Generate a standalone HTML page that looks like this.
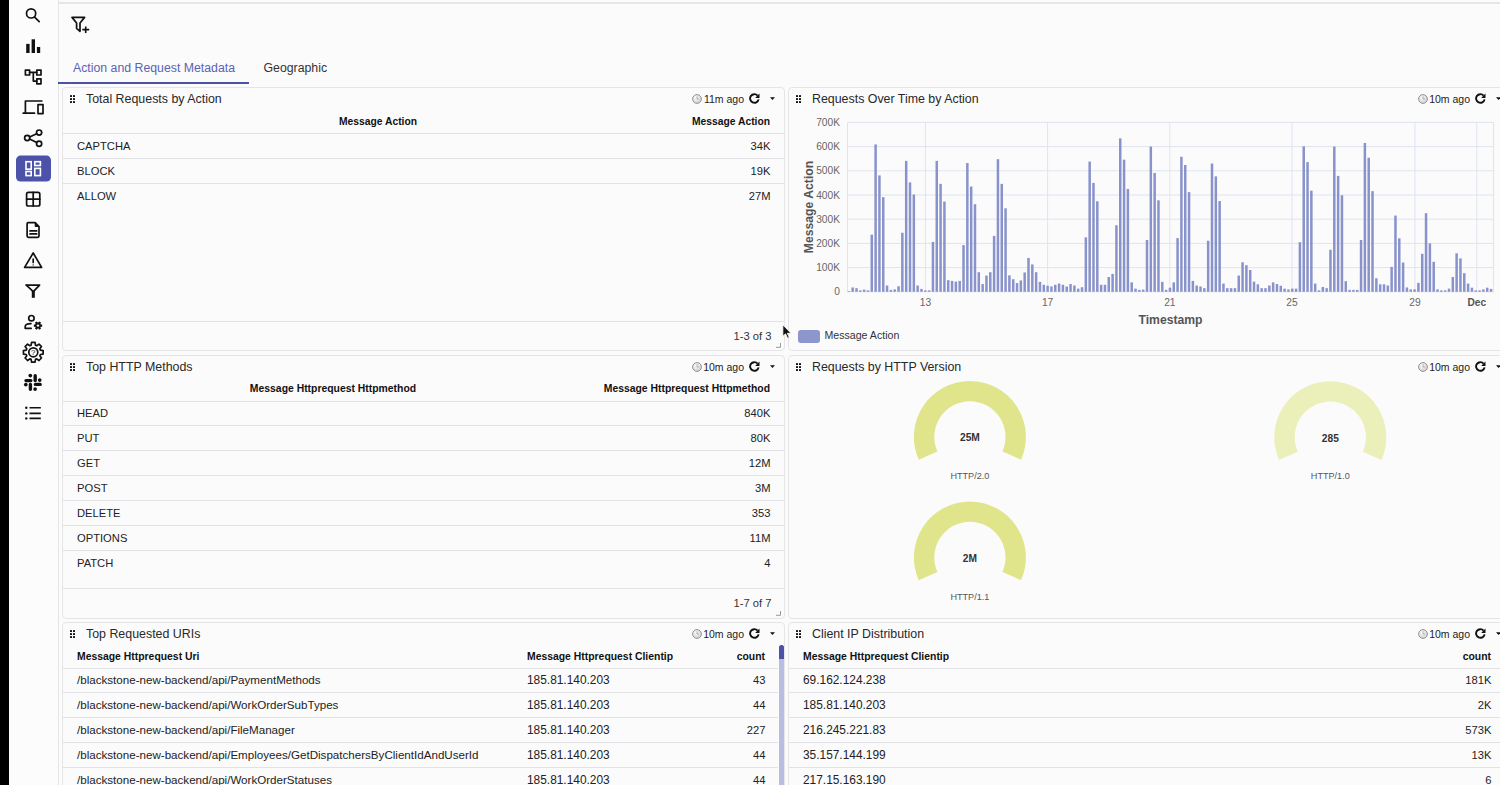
<!DOCTYPE html>
<html><head><meta charset="utf-8"><style>
html,body{margin:0;padding:0;}
body{width:1500px;height:785px;overflow:hidden;position:relative;background:#fcfbfc;font-family:"Liberation Sans", sans-serif;}
.t{position:absolute;white-space:nowrap;}
.r{position:absolute;}
.p{position:absolute;box-sizing:border-box;border:1.3px solid #e5e4e7;border-radius:4px;background:#fcfbfc;}
</style></head><body>
<div class="r" style="left:9px;top:0px;width:48.5px;height:785px;background:#fdfcfd;"></div>
<div class="r" style="left:0px;top:0px;width:9px;height:785px;background:#000;"></div>
<div class="r" style="left:57.5px;top:0px;width:1.5px;height:785px;background:#e5e4e7;"></div>
<div class="r" style="left:59px;top:2px;width:1441px;height:2px;background:#e6e5e8;"></div>
<svg class="r" style="left:0;top:0" width="57" height="440" viewBox="0 0 57 440">
<circle cx="31.1" cy="13.4" r="4.6" stroke="#111" fill="none" stroke-width="1.7" stroke-linecap="round" stroke-linejoin="round"/><path d="M34.6 17.2L39.2 21.6" stroke="#111" fill="none" stroke-width="1.7" stroke-linecap="round" stroke-linejoin="round" stroke-width="1.9"/>
<rect x="26.2" y="43.9" width="3.4" height="9.1" fill="#111"/><rect x="31.6" y="39.3" width="3.4" height="13.7" fill="#111"/><rect x="36.9" y="47" width="3.3" height="6" fill="#111"/>
<rect x="25.4" y="70.1" width="4.2" height="4.9" stroke="#111" fill="none" stroke-width="1.7" stroke-linecap="round" stroke-linejoin="round" stroke-width="1.5" stroke-linecap="butt" stroke-linejoin="miter"/>
<rect x="36.8" y="70.1" width="4.2" height="4.9" stroke="#111" fill="none" stroke-width="1.7" stroke-linecap="round" stroke-linejoin="round" stroke-width="1.5" stroke-linecap="butt" stroke-linejoin="miter"/>
<rect x="36.8" y="78.8" width="4.2" height="5" stroke="#111" fill="none" stroke-width="1.7" stroke-linecap="round" stroke-linejoin="round" stroke-width="1.5" stroke-linecap="butt" stroke-linejoin="miter"/>
<path d="M29.6 72.3H36.8M33.3 72.3V81.1H36.8" stroke="#111" fill="none" stroke-width="1.7" stroke-linecap="round" stroke-linejoin="round" stroke-width="1.4" stroke-linecap="butt"/>
<path d="M41.8 101H25.4V113.2M23.2 113.2H34.5" stroke="#111" fill="none" stroke-width="1.7" stroke-linecap="round" stroke-linejoin="round" stroke-width="2" stroke-linecap="butt"/>
<rect x="38" y="104.6" width="5" height="9" stroke="#111" fill="none" stroke-width="1.7" stroke-linecap="round" stroke-linejoin="round" stroke-width="1.8" stroke-linecap="butt"/>
<circle cx="27.2" cy="138" r="2.6" stroke="#111" fill="none" stroke-width="1.7" stroke-linecap="round" stroke-linejoin="round" stroke-width="1.6"/><circle cx="39.1" cy="132.6" r="2.6" stroke="#111" fill="none" stroke-width="1.7" stroke-linecap="round" stroke-linejoin="round" stroke-width="1.6"/><circle cx="39.1" cy="143.7" r="2.6" stroke="#111" fill="none" stroke-width="1.7" stroke-linecap="round" stroke-linejoin="round" stroke-width="1.6"/>
<path d="M29.6 136.9L36.7 133.7M29.6 139.1L36.7 142.6" stroke="#111" fill="none" stroke-width="1.7" stroke-linecap="round" stroke-linejoin="round" stroke-width="1.5"/>
<rect x="16" y="155.6" width="35" height="26" rx="4.5" fill="#4b52a7"/>
<rect x="26" y="161.7" width="5.2" height="7.5" stroke="#fff" stroke-width="1.6" fill="none"/>
<rect x="34.8" y="161.7" width="5.6" height="3.8" stroke="#fff" stroke-width="1.6" fill="none"/>
<rect x="26" y="171.5" width="5.2" height="4.1" stroke="#fff" stroke-width="1.6" fill="none"/>
<rect x="34.8" y="168.4" width="5.6" height="7.2" stroke="#fff" stroke-width="1.6" fill="none"/>
<rect x="26.6" y="192.4" width="13.2" height="13.6" rx="1.8" stroke="#111" fill="none" stroke-width="1.7" stroke-linecap="round" stroke-linejoin="round" stroke-width="1.9"/><path d="M33.2 192.4V206M26.6 199.2H39.8" stroke="#111" fill="none" stroke-width="1.7" stroke-linecap="round" stroke-linejoin="round" stroke-width="1.7"/>
<path d="M28.3 222.6H35.2L39 226.5V236.1A1.2 1.2 0 0 1 37.8 237.3H28.3A1.2 1.2 0 0 1 27.1 236.1V223.8A1.2 1.2 0 0 1 28.3 222.6Z" stroke="#111" fill="none" stroke-width="1.7" stroke-linecap="round" stroke-linejoin="round" stroke-width="1.6"/>
<path d="M35.2 222.6V226.5H39" fill="#111" stroke="#111" stroke-width="1"/>
<path d="M30 230.9H36.7M30 233.9H36.7" stroke="#111" fill="none" stroke-width="1.7" stroke-linecap="round" stroke-linejoin="round" stroke-width="1.2"/>
<path d="M33.2 253L24.6 267.4H41.6Z" stroke="#111" fill="none" stroke-width="1.7" stroke-linecap="round" stroke-linejoin="round" stroke-width="1.6"/><path d="M33.2 259V262.4" stroke="#111" fill="none" stroke-width="1.7" stroke-linecap="round" stroke-linejoin="round" stroke-width="1.3"/><circle cx="33.2" cy="264.9" r="0.7" fill="#111"/>
<path d="M26.3 285.1H39.6L33.3 291.6" stroke="#111" fill="none" stroke-width="1.7" stroke-linecap="round" stroke-linejoin="round" stroke-width="1.7"/><path d="M26.3 285.1L33.3 291.6" stroke="#111" fill="none" stroke-width="1.7" stroke-linecap="round" stroke-linejoin="round" stroke-width="1.7"/><rect x="31.8" y="291" width="3" height="6.8" fill="#111"/>
<circle cx="31.4" cy="318.2" r="2.7" stroke="#111" fill="none" stroke-width="1.7" stroke-linecap="round" stroke-linejoin="round" stroke-width="1.5"/><path d="M31.2 328.3H25.2V326.6C25.2 324.6 28 323.6 31 323.6" stroke="#111" fill="none" stroke-width="1.7" stroke-linecap="round" stroke-linejoin="round" stroke-width="1.6"/>
<path d="M40.77 324.44L42.15 324.49L42.15 326.71L40.77 326.76L40.39 327.41L41.04 328.64L39.11 329.75L38.38 328.58L37.62 328.58L36.89 329.75L34.96 328.64L35.61 327.41L35.23 326.76L33.85 326.71L33.85 324.49L35.23 324.44L35.61 323.79L34.96 322.56L36.89 321.45L37.62 322.62L38.38 322.62L39.11 321.45L41.04 322.56L40.39 323.79Z" fill="#111"/><circle cx="38" cy="325.6" r="1.2" fill="#fcfbfc"/>
<path d="M40.37 350.12L43.14 350.54L43.14 354.06L40.37 354.48L39.84 355.76L41.50 358.02L39.02 360.50L36.76 358.84L35.48 359.37L35.06 362.14L31.54 362.14L31.12 359.37L29.84 358.84L27.58 360.50L25.10 358.02L26.76 355.76L26.23 354.48L23.46 354.06L23.46 350.54L26.23 350.12L26.76 348.84L25.10 346.58L27.58 344.10L29.84 345.76L31.12 345.23L31.54 342.46L35.06 342.46L35.48 345.23L36.76 345.76L39.02 344.10L41.50 346.58L39.84 348.84Z" stroke="#111" fill="none" stroke-width="1.7" stroke-linecap="round" stroke-linejoin="round" stroke-width="1.5"/>
<circle cx="33.3" cy="352.3" r="4.5" stroke="#111" fill="none" stroke-width="1.7" stroke-linecap="round" stroke-linejoin="round" stroke-width="1.2"/>
<text x="33.3" y="355.2" font-size="8" font-family="Liberation Sans" text-anchor="middle" fill="#111">?</text>
<g stroke="#111" stroke-width="3.4" stroke-linecap="round" fill="none">
<path d="M26 380.6H30.8M35.2 375.8V380.6M35.4 384.4H40.2M30.4 384.4V389.2"/></g>
<g fill="#111"><circle cx="30.3" cy="375.6" r="1.85"/><circle cx="39.7" cy="380.1" r="1.85"/><circle cx="35.1" cy="389.1" r="1.85"/><circle cx="25.8" cy="384.6" r="1.85"/></g>
<circle cx="26.3" cy="407.8" r="1.2" fill="#111"/><circle cx="26.3" cy="413.4" r="1.2" fill="#111"/><circle cx="26.3" cy="418.4" r="1.2" fill="#111"/>
<path d="M29.5 407.8H40.8M29.5 413.4H40.8M29.5 418.4H40.8" stroke="#111" stroke-width="1.6"/>
</svg>
<svg class="r" style="left:0;top:0" width="100" height="40" viewBox="0 0 100 40">
<path d="M72 17.4H84.6L80 23V31.3L76.6 28.4V23Z" stroke="#111" stroke-width="1.7" fill="none" stroke-linejoin="round"/>
<path d="M82.3 29.6H89.2M85.7 26.4V33" stroke="#111" stroke-width="1.6"/>
</svg>
<div class="t" style="left:73px;top:60.40px;font-size:12.3px;line-height:16px;font-weight:normal;color:#5a64b2;">Action and Request Metadata</div>
<div class="t" style="left:263.5px;top:60.40px;font-size:12.3px;line-height:16px;font-weight:normal;color:#333;">Geographic</div>
<div class="r" style="left:58.3px;top:82px;width:191px;height:2.2px;background:#4b52a7;"></div>
<div class="p" style="left:62px;top:87px;width:723px;height:264px"></div>
<div class="r" style="left:70.0px;top:95.0px;width:2px;height:2px;background:#111;border-radius:0.6px"></div>
<div class="r" style="left:70.0px;top:98.1px;width:2px;height:2px;background:#111;border-radius:0.6px"></div>
<div class="r" style="left:70.0px;top:101.2px;width:2px;height:2px;background:#111;border-radius:0.6px"></div>
<div class="r" style="left:73.3px;top:95.0px;width:2px;height:2px;background:#111;border-radius:0.6px"></div>
<div class="r" style="left:73.3px;top:98.1px;width:2px;height:2px;background:#111;border-radius:0.6px"></div>
<div class="r" style="left:73.3px;top:101.2px;width:2px;height:2px;background:#111;border-radius:0.6px"></div>
<div class="t" style="left:86px;top:90.50px;font-size:12.4px;line-height:16px;font-weight:normal;color:#282828;">Total Requests by Action</div>
<svg class="r" style="left:770px;top:96.8px" width="5" height="3.2" viewBox="0 0 5 3.2"><path d="M0 0.2H5L2.5 3Z" fill="#111"/></svg>
<svg class="r" style="left:749.4px;top:93.2px" width="11" height="11" viewBox="0 0 11 11"><path d="M8.6 2.6A4.3 4.3 0 1 0 9.6 6.4" stroke="#111" stroke-width="1.9" fill="none"/><path d="M10.5 0.6V4.9H6.2Z" fill="#111"/></svg>
<div class="t" style="left:44px;width:700px;text-align:right;top:92.10px;font-size:10.5px;line-height:14px;font-weight:normal;color:#222;">11m ago</div>
<svg class="r" style="left:692px;top:93.5px" width="10" height="10" viewBox="0 0 10 10"><defs><radialGradient id="cg" cx="0.4" cy="0.35" r="0.7"><stop offset="0" stop-color="#fafafa"/><stop offset="1" stop-color="#cfcfcf"/></radialGradient></defs><circle cx="5" cy="5" r="4.4" fill="url(#cg)" stroke="#8a8a8a" stroke-width="0.9"/><path d="M5 2.3V5H6.9" stroke="#888" stroke-width="0.6" fill="none"/></svg>
<div class="t" style="left:28px;width:700px;text-align:center;top:114.80px;font-size:10.3px;line-height:13px;font-weight:bold;color:#111;">Message Action</div>
<div class="t" style="left:70px;width:700px;text-align:right;top:114.80px;font-size:10.3px;line-height:13px;font-weight:bold;color:#111;">Message Action</div>
<div class="r" style="left:63px;top:133px;width:721px;height:1px;background:#e2e1e5;"></div>
<div class="t" style="left:77px;top:138.80px;font-size:11.2px;line-height:15px;font-weight:normal;color:#222;">CAPTCHA</div>
<div class="t" style="left:70.5px;width:700px;text-align:right;top:138.80px;font-size:11.2px;line-height:15px;font-weight:normal;color:#222;">34K</div>
<div class="r" style="left:63px;top:158px;width:721px;height:1px;background:#e2e1e5;"></div>
<div class="t" style="left:77px;top:163.80px;font-size:11.2px;line-height:15px;font-weight:normal;color:#222;">BLOCK</div>
<div class="t" style="left:70.5px;width:700px;text-align:right;top:163.80px;font-size:11.2px;line-height:15px;font-weight:normal;color:#222;">19K</div>
<div class="r" style="left:63px;top:183px;width:721px;height:1px;background:#e2e1e5;"></div>
<div class="t" style="left:77px;top:188.80px;font-size:11.2px;line-height:15px;font-weight:normal;color:#222;">ALLOW</div>
<div class="t" style="left:70.5px;width:700px;text-align:right;top:188.80px;font-size:11.2px;line-height:15px;font-weight:normal;color:#222;">27M</div>
<div class="r" style="left:63px;top:321px;width:721px;height:1px;background:#e2e1e5;"></div>
<div class="t" style="left:71.39999999999998px;width:700px;text-align:right;top:328.60px;font-size:11.2px;line-height:15px;font-weight:normal;color:#333;">1-3 of 3</div>
<svg class="r" style="left:775px;top:342px" width="7" height="7" viewBox="0 0 7 7"><path d="M1 5.3H5.5V1" stroke="#999" stroke-width="1" fill="none"/></svg>
<div class="p" style="left:62px;top:355px;width:723px;height:263.5px"></div>
<div class="r" style="left:70.0px;top:363.0px;width:2px;height:2px;background:#111;border-radius:0.6px"></div>
<div class="r" style="left:70.0px;top:366.1px;width:2px;height:2px;background:#111;border-radius:0.6px"></div>
<div class="r" style="left:70.0px;top:369.2px;width:2px;height:2px;background:#111;border-radius:0.6px"></div>
<div class="r" style="left:73.3px;top:363.0px;width:2px;height:2px;background:#111;border-radius:0.6px"></div>
<div class="r" style="left:73.3px;top:366.1px;width:2px;height:2px;background:#111;border-radius:0.6px"></div>
<div class="r" style="left:73.3px;top:369.2px;width:2px;height:2px;background:#111;border-radius:0.6px"></div>
<div class="t" style="left:86px;top:358.50px;font-size:12.4px;line-height:16px;font-weight:normal;color:#282828;">Top HTTP Methods</div>
<svg class="r" style="left:770px;top:364.8px" width="5" height="3.2" viewBox="0 0 5 3.2"><path d="M0 0.2H5L2.5 3Z" fill="#111"/></svg>
<svg class="r" style="left:749.4px;top:361.2px" width="11" height="11" viewBox="0 0 11 11"><path d="M8.6 2.6A4.3 4.3 0 1 0 9.6 6.4" stroke="#111" stroke-width="1.9" fill="none"/><path d="M10.5 0.6V4.9H6.2Z" fill="#111"/></svg>
<div class="t" style="left:44px;width:700px;text-align:right;top:360.10px;font-size:10.5px;line-height:14px;font-weight:normal;color:#222;">10m ago</div>
<svg class="r" style="left:692px;top:361.5px" width="10" height="10" viewBox="0 0 10 10"><defs><radialGradient id="cg" cx="0.4" cy="0.35" r="0.7"><stop offset="0" stop-color="#fafafa"/><stop offset="1" stop-color="#cfcfcf"/></radialGradient></defs><circle cx="5" cy="5" r="4.4" fill="url(#cg)" stroke="#8a8a8a" stroke-width="0.9"/><path d="M5 2.3V5H6.9" stroke="#888" stroke-width="0.6" fill="none"/></svg>
<div class="t" style="left:-17px;width:700px;text-align:center;top:381.80px;font-size:10.4px;line-height:14px;font-weight:bold;color:#111;">Message Httprequest Httpmethod</div>
<div class="t" style="left:70px;width:700px;text-align:right;top:381.80px;font-size:10.4px;line-height:14px;font-weight:bold;color:#111;">Message Httprequest Httpmethod</div>
<div class="r" style="left:63px;top:401px;width:721px;height:1px;background:#e2e1e5;"></div>
<div class="t" style="left:77px;top:406.30px;font-size:11.2px;line-height:15px;font-weight:normal;color:#222;">HEAD</div>
<div class="t" style="left:70.5px;width:700px;text-align:right;top:406.30px;font-size:11.2px;line-height:15px;font-weight:normal;color:#222;">840K</div>
<div class="r" style="left:63px;top:425px;width:721px;height:1px;background:#e2e1e5;"></div>
<div class="t" style="left:77px;top:431.30px;font-size:11.2px;line-height:15px;font-weight:normal;color:#222;">PUT</div>
<div class="t" style="left:70.5px;width:700px;text-align:right;top:431.30px;font-size:11.2px;line-height:15px;font-weight:normal;color:#222;">80K</div>
<div class="r" style="left:63px;top:450px;width:721px;height:1px;background:#e2e1e5;"></div>
<div class="t" style="left:77px;top:456.30px;font-size:11.2px;line-height:15px;font-weight:normal;color:#222;">GET</div>
<div class="t" style="left:70.5px;width:700px;text-align:right;top:456.30px;font-size:11.2px;line-height:15px;font-weight:normal;color:#222;">12M</div>
<div class="r" style="left:63px;top:475px;width:721px;height:1px;background:#e2e1e5;"></div>
<div class="t" style="left:77px;top:481.30px;font-size:11.2px;line-height:15px;font-weight:normal;color:#222;">POST</div>
<div class="t" style="left:70.5px;width:700px;text-align:right;top:481.30px;font-size:11.2px;line-height:15px;font-weight:normal;color:#222;">3M</div>
<div class="r" style="left:63px;top:500px;width:721px;height:1px;background:#e2e1e5;"></div>
<div class="t" style="left:77px;top:506.30px;font-size:11.2px;line-height:15px;font-weight:normal;color:#222;">DELETE</div>
<div class="t" style="left:70.5px;width:700px;text-align:right;top:506.30px;font-size:11.2px;line-height:15px;font-weight:normal;color:#222;">353</div>
<div class="r" style="left:63px;top:525px;width:721px;height:1px;background:#e2e1e5;"></div>
<div class="t" style="left:77px;top:531.30px;font-size:11.2px;line-height:15px;font-weight:normal;color:#222;">OPTIONS</div>
<div class="t" style="left:70.5px;width:700px;text-align:right;top:531.30px;font-size:11.2px;line-height:15px;font-weight:normal;color:#222;">11M</div>
<div class="r" style="left:63px;top:550px;width:721px;height:1px;background:#e2e1e5;"></div>
<div class="t" style="left:77px;top:556.30px;font-size:11.2px;line-height:15px;font-weight:normal;color:#222;">PATCH</div>
<div class="t" style="left:70.5px;width:700px;text-align:right;top:556.30px;font-size:11.2px;line-height:15px;font-weight:normal;color:#222;">4</div>
<div class="r" style="left:63px;top:588px;width:721px;height:1px;background:#e2e1e5;"></div>
<div class="t" style="left:71.39999999999998px;width:700px;text-align:right;top:596.00px;font-size:11.2px;line-height:15px;font-weight:normal;color:#333;">1-7 of 7</div>
<svg class="r" style="left:775px;top:609.5px" width="7" height="7" viewBox="0 0 7 7"><path d="M1 5.3H5.5V1" stroke="#999" stroke-width="1" fill="none"/></svg>
<div class="p" style="left:62px;top:622px;width:723px;height:200px"></div>
<div class="r" style="left:70.0px;top:630.0px;width:2px;height:2px;background:#111;border-radius:0.6px"></div>
<div class="r" style="left:70.0px;top:633.1px;width:2px;height:2px;background:#111;border-radius:0.6px"></div>
<div class="r" style="left:70.0px;top:636.2px;width:2px;height:2px;background:#111;border-radius:0.6px"></div>
<div class="r" style="left:73.3px;top:630.0px;width:2px;height:2px;background:#111;border-radius:0.6px"></div>
<div class="r" style="left:73.3px;top:633.1px;width:2px;height:2px;background:#111;border-radius:0.6px"></div>
<div class="r" style="left:73.3px;top:636.2px;width:2px;height:2px;background:#111;border-radius:0.6px"></div>
<div class="t" style="left:86px;top:625.50px;font-size:12.4px;line-height:16px;font-weight:normal;color:#282828;">Top Requested URIs</div>
<svg class="r" style="left:770px;top:631.8px" width="5" height="3.2" viewBox="0 0 5 3.2"><path d="M0 0.2H5L2.5 3Z" fill="#111"/></svg>
<svg class="r" style="left:749.4px;top:628.2px" width="11" height="11" viewBox="0 0 11 11"><path d="M8.6 2.6A4.3 4.3 0 1 0 9.6 6.4" stroke="#111" stroke-width="1.9" fill="none"/><path d="M10.5 0.6V4.9H6.2Z" fill="#111"/></svg>
<div class="t" style="left:44px;width:700px;text-align:right;top:627.10px;font-size:10.5px;line-height:14px;font-weight:normal;color:#222;">10m ago</div>
<svg class="r" style="left:692px;top:628.5px" width="10" height="10" viewBox="0 0 10 10"><defs><radialGradient id="cg" cx="0.4" cy="0.35" r="0.7"><stop offset="0" stop-color="#fafafa"/><stop offset="1" stop-color="#cfcfcf"/></radialGradient></defs><circle cx="5" cy="5" r="4.4" fill="url(#cg)" stroke="#8a8a8a" stroke-width="0.9"/><path d="M5 2.3V5H6.9" stroke="#888" stroke-width="0.6" fill="none"/></svg>
<div class="t" style="left:77px;top:649.60px;font-size:10.4px;line-height:14px;font-weight:bold;color:#111;">Message Httprequest Uri</div>
<div class="t" style="left:527px;top:649.60px;font-size:10.4px;line-height:14px;font-weight:bold;color:#111;">Message Httprequest Clientip</div>
<div class="t" style="left:65px;width:700px;text-align:right;top:649.60px;font-size:10.4px;line-height:14px;font-weight:bold;color:#111;">count</div>
<div class="r" style="left:63px;top:668px;width:715px;height:1px;background:#e2e1e5;"></div>
<div class="t" style="left:77px;top:671.80px;font-size:11.6px;line-height:15px;font-weight:normal;color:#222;">/blackstone-new-backend/api/PaymentMethods</div>
<div class="t" style="left:527px;top:672.80px;font-size:11.9px;line-height:15px;font-weight:normal;color:#222;">185.81.140.203</div>
<div class="t" style="left:65.5px;width:700px;text-align:right;top:672.70px;font-size:11.2px;line-height:15px;font-weight:normal;color:#222;">43</div>
<div class="r" style="left:63px;top:692px;width:715px;height:1px;background:#e2e1e5;"></div>
<div class="t" style="left:77px;top:696.80px;font-size:11.6px;line-height:15px;font-weight:normal;color:#222;">/blackstone-new-backend/api/WorkOrderSubTypes</div>
<div class="t" style="left:527px;top:697.80px;font-size:11.9px;line-height:15px;font-weight:normal;color:#222;">185.81.140.203</div>
<div class="t" style="left:65.5px;width:700px;text-align:right;top:697.70px;font-size:11.2px;line-height:15px;font-weight:normal;color:#222;">44</div>
<div class="r" style="left:63px;top:717px;width:715px;height:1px;background:#e2e1e5;"></div>
<div class="t" style="left:77px;top:721.80px;font-size:11.6px;line-height:15px;font-weight:normal;color:#222;">/blackstone-new-backend/api/FileManager</div>
<div class="t" style="left:527px;top:722.80px;font-size:11.9px;line-height:15px;font-weight:normal;color:#222;">185.81.140.203</div>
<div class="t" style="left:65.5px;width:700px;text-align:right;top:722.70px;font-size:11.2px;line-height:15px;font-weight:normal;color:#222;">227</div>
<div class="r" style="left:63px;top:742px;width:715px;height:1px;background:#e2e1e5;"></div>
<div class="t" style="left:77px;top:746.80px;font-size:11.6px;line-height:15px;font-weight:normal;color:#222;">/blackstone-new-backend/api/Employees/GetDispatchersByClientIdAndUserId</div>
<div class="t" style="left:527px;top:747.80px;font-size:11.9px;line-height:15px;font-weight:normal;color:#222;">185.81.140.203</div>
<div class="t" style="left:65.5px;width:700px;text-align:right;top:747.70px;font-size:11.2px;line-height:15px;font-weight:normal;color:#222;">44</div>
<div class="r" style="left:63px;top:767px;width:715px;height:1px;background:#e2e1e5;"></div>
<div class="t" style="left:77px;top:771.80px;font-size:11.6px;line-height:15px;font-weight:normal;color:#222;">/blackstone-new-backend/api/WorkOrderStatuses</div>
<div class="t" style="left:527px;top:772.80px;font-size:11.9px;line-height:15px;font-weight:normal;color:#222;">185.81.140.203</div>
<div class="t" style="left:65.5px;width:700px;text-align:right;top:772.70px;font-size:11.2px;line-height:15px;font-weight:normal;color:#222;">44</div>
<div class="r" style="left:779px;top:645px;width:5px;height:140px;background:#b9bde1;border-radius:2.5px 2.5px 0 0"></div>
<div class="r" style="left:779px;top:645px;width:5px;height:13.6px;background:#4b52a7;border-radius:2.5px 2.5px 0 0"></div>
<div class="p" style="left:788px;top:622px;width:723px;height:200px"></div>
<div class="r" style="left:796.0px;top:630.0px;width:2px;height:2px;background:#111;border-radius:0.6px"></div>
<div class="r" style="left:796.0px;top:633.1px;width:2px;height:2px;background:#111;border-radius:0.6px"></div>
<div class="r" style="left:796.0px;top:636.2px;width:2px;height:2px;background:#111;border-radius:0.6px"></div>
<div class="r" style="left:799.3px;top:630.0px;width:2px;height:2px;background:#111;border-radius:0.6px"></div>
<div class="r" style="left:799.3px;top:633.1px;width:2px;height:2px;background:#111;border-radius:0.6px"></div>
<div class="r" style="left:799.3px;top:636.2px;width:2px;height:2px;background:#111;border-radius:0.6px"></div>
<div class="t" style="left:812px;top:625.50px;font-size:12.4px;line-height:16px;font-weight:normal;color:#282828;">Client IP Distribution</div>
<svg class="r" style="left:1496px;top:631.8px" width="5" height="3.2" viewBox="0 0 5 3.2"><path d="M0 0.2H5L2.5 3Z" fill="#111"/></svg>
<svg class="r" style="left:1475.4px;top:628.2px" width="11" height="11" viewBox="0 0 11 11"><path d="M8.6 2.6A4.3 4.3 0 1 0 9.6 6.4" stroke="#111" stroke-width="1.9" fill="none"/><path d="M10.5 0.6V4.9H6.2Z" fill="#111"/></svg>
<div class="t" style="left:770px;width:700px;text-align:right;top:627.10px;font-size:10.5px;line-height:14px;font-weight:normal;color:#222;">10m ago</div>
<svg class="r" style="left:1418px;top:628.5px" width="10" height="10" viewBox="0 0 10 10"><defs><radialGradient id="cg" cx="0.4" cy="0.35" r="0.7"><stop offset="0" stop-color="#fafafa"/><stop offset="1" stop-color="#cfcfcf"/></radialGradient></defs><circle cx="5" cy="5" r="4.4" fill="url(#cg)" stroke="#8a8a8a" stroke-width="0.9"/><path d="M5 2.3V5H6.9" stroke="#888" stroke-width="0.6" fill="none"/></svg>
<div class="t" style="left:803px;top:649.60px;font-size:10.4px;line-height:14px;font-weight:bold;color:#111;">Message Httprequest Clientip</div>
<div class="t" style="left:791px;width:700px;text-align:right;top:649.60px;font-size:10.4px;line-height:14px;font-weight:bold;color:#111;">count</div>
<div class="r" style="left:789px;top:668px;width:711px;height:1px;background:#e2e1e5;"></div>
<div class="t" style="left:803px;top:672.80px;font-size:11.9px;line-height:15px;font-weight:normal;color:#222;">69.162.124.238</div>
<div class="t" style="left:791.5px;width:700px;text-align:right;top:672.70px;font-size:11.2px;line-height:15px;font-weight:normal;color:#222;">181K</div>
<div class="r" style="left:789px;top:692px;width:711px;height:1px;background:#e2e1e5;"></div>
<div class="t" style="left:803px;top:697.80px;font-size:11.9px;line-height:15px;font-weight:normal;color:#222;">185.81.140.203</div>
<div class="t" style="left:791.5px;width:700px;text-align:right;top:697.70px;font-size:11.2px;line-height:15px;font-weight:normal;color:#222;">2K</div>
<div class="r" style="left:789px;top:717px;width:711px;height:1px;background:#e2e1e5;"></div>
<div class="t" style="left:803px;top:722.80px;font-size:11.9px;line-height:15px;font-weight:normal;color:#222;">216.245.221.83</div>
<div class="t" style="left:791.5px;width:700px;text-align:right;top:722.70px;font-size:11.2px;line-height:15px;font-weight:normal;color:#222;">573K</div>
<div class="r" style="left:789px;top:742px;width:711px;height:1px;background:#e2e1e5;"></div>
<div class="t" style="left:803px;top:747.80px;font-size:11.9px;line-height:15px;font-weight:normal;color:#222;">35.157.144.199</div>
<div class="t" style="left:791.5px;width:700px;text-align:right;top:747.70px;font-size:11.2px;line-height:15px;font-weight:normal;color:#222;">13K</div>
<div class="r" style="left:789px;top:767px;width:711px;height:1px;background:#e2e1e5;"></div>
<div class="t" style="left:803px;top:772.80px;font-size:11.9px;line-height:15px;font-weight:normal;color:#222;">217.15.163.190</div>
<div class="t" style="left:791.5px;width:700px;text-align:right;top:772.70px;font-size:11.2px;line-height:15px;font-weight:normal;color:#222;">6</div>
<div class="p" style="left:788px;top:87px;width:723px;height:264px"></div>
<div class="r" style="left:796.0px;top:95.0px;width:2px;height:2px;background:#111;border-radius:0.6px"></div>
<div class="r" style="left:796.0px;top:98.1px;width:2px;height:2px;background:#111;border-radius:0.6px"></div>
<div class="r" style="left:796.0px;top:101.2px;width:2px;height:2px;background:#111;border-radius:0.6px"></div>
<div class="r" style="left:799.3px;top:95.0px;width:2px;height:2px;background:#111;border-radius:0.6px"></div>
<div class="r" style="left:799.3px;top:98.1px;width:2px;height:2px;background:#111;border-radius:0.6px"></div>
<div class="r" style="left:799.3px;top:101.2px;width:2px;height:2px;background:#111;border-radius:0.6px"></div>
<div class="t" style="left:812px;top:90.50px;font-size:12.4px;line-height:16px;font-weight:normal;color:#282828;">Requests Over Time by Action</div>
<svg class="r" style="left:1496px;top:96.8px" width="5" height="3.2" viewBox="0 0 5 3.2"><path d="M0 0.2H5L2.5 3Z" fill="#111"/></svg>
<svg class="r" style="left:1475.4px;top:93.2px" width="11" height="11" viewBox="0 0 11 11"><path d="M8.6 2.6A4.3 4.3 0 1 0 9.6 6.4" stroke="#111" stroke-width="1.9" fill="none"/><path d="M10.5 0.6V4.9H6.2Z" fill="#111"/></svg>
<div class="t" style="left:770px;width:700px;text-align:right;top:92.10px;font-size:10.5px;line-height:14px;font-weight:normal;color:#222;">10m ago</div>
<svg class="r" style="left:1418px;top:93.5px" width="10" height="10" viewBox="0 0 10 10"><defs><radialGradient id="cg" cx="0.4" cy="0.35" r="0.7"><stop offset="0" stop-color="#fafafa"/><stop offset="1" stop-color="#cfcfcf"/></radialGradient></defs><circle cx="5" cy="5" r="4.4" fill="url(#cg)" stroke="#8a8a8a" stroke-width="0.9"/><path d="M5 2.3V5H6.9" stroke="#888" stroke-width="0.6" fill="none"/></svg>
<svg class="r" style="left:0;top:0" width="1500" height="360" viewBox="0 0 1500 360"><line x1="847.5" x2="1493.5" y1="291.80" y2="291.80" stroke="#dfe4f0" stroke-width="1"/><line x1="847.5" x2="1493.5" y1="267.60" y2="267.60" stroke="#dfe4f0" stroke-width="1"/><line x1="847.5" x2="1493.5" y1="243.40" y2="243.40" stroke="#dfe4f0" stroke-width="1"/><line x1="847.5" x2="1493.5" y1="219.20" y2="219.20" stroke="#dfe4f0" stroke-width="1"/><line x1="847.5" x2="1493.5" y1="195.00" y2="195.00" stroke="#dfe4f0" stroke-width="1"/><line x1="847.5" x2="1493.5" y1="170.80" y2="170.80" stroke="#dfe4f0" stroke-width="1"/><line x1="847.5" x2="1493.5" y1="146.60" y2="146.60" stroke="#dfe4f0" stroke-width="1"/><line x1="847.5" x2="1493.5" y1="122.40" y2="122.40" stroke="#dfe4f0" stroke-width="1"/><line x1="847.5" x2="847.5" y1="122.4" y2="291.8" stroke="#dfe4f0" stroke-width="1"/><line x1="925.4" x2="925.4" y1="122.4" y2="291.8" stroke="#dfe4f0" stroke-width="1"/><line x1="1047.6" x2="1047.6" y1="122.4" y2="291.8" stroke="#dfe4f0" stroke-width="1"/><line x1="1169.8" x2="1169.8" y1="122.4" y2="291.8" stroke="#dfe4f0" stroke-width="1"/><line x1="1292.0" x2="1292.0" y1="122.4" y2="291.8" stroke="#dfe4f0" stroke-width="1"/><line x1="1414.9" x2="1414.9" y1="122.4" y2="291.8" stroke="#dfe4f0" stroke-width="1"/><line x1="1476.8" x2="1476.8" y1="122.4" y2="291.8" stroke="#dfe4f0" stroke-width="1"/><line x1="1493.5" x2="1493.5" y1="122.4" y2="291.8" stroke="#dfe4f0" stroke-width="1"/><rect x="847.60" y="291.07" width="2.5" height="0.73" fill="#8993cb"/><rect x="851.42" y="287.44" width="2.5" height="4.36" fill="#8993cb"/><rect x="855.24" y="288.17" width="2.5" height="3.63" fill="#8993cb"/><rect x="859.07" y="290.35" width="2.5" height="1.45" fill="#8993cb"/><rect x="862.89" y="289.62" width="2.5" height="2.18" fill="#8993cb"/><rect x="866.71" y="290.35" width="2.5" height="1.45" fill="#8993cb"/><rect x="870.53" y="234.69" width="2.5" height="57.11" fill="#8993cb"/><rect x="874.36" y="144.42" width="2.5" height="147.38" fill="#8993cb"/><rect x="878.18" y="175.40" width="2.5" height="116.40" fill="#8993cb"/><rect x="882.00" y="197.18" width="2.5" height="94.62" fill="#8993cb"/><rect x="885.82" y="285.51" width="2.5" height="6.29" fill="#8993cb"/><rect x="889.65" y="289.86" width="2.5" height="1.94" fill="#8993cb"/><rect x="893.47" y="289.38" width="2.5" height="2.42" fill="#8993cb"/><rect x="897.29" y="286.23" width="2.5" height="5.57" fill="#8993cb"/><rect x="901.11" y="232.75" width="2.5" height="59.05" fill="#8993cb"/><rect x="904.94" y="160.88" width="2.5" height="130.92" fill="#8993cb"/><rect x="908.76" y="182.42" width="2.5" height="109.38" fill="#8993cb"/><rect x="912.58" y="194.52" width="2.5" height="97.28" fill="#8993cb"/><rect x="916.40" y="285.51" width="2.5" height="6.29" fill="#8993cb"/><rect x="920.23" y="288.90" width="2.5" height="2.90" fill="#8993cb"/><rect x="924.05" y="290.35" width="2.5" height="1.45" fill="#8993cb"/><rect x="927.87" y="290.35" width="2.5" height="1.45" fill="#8993cb"/><rect x="931.69" y="241.95" width="2.5" height="49.85" fill="#8993cb"/><rect x="935.52" y="160.88" width="2.5" height="130.92" fill="#8993cb"/><rect x="939.34" y="183.87" width="2.5" height="107.93" fill="#8993cb"/><rect x="943.16" y="201.53" width="2.5" height="90.27" fill="#8993cb"/><rect x="946.98" y="280.18" width="2.5" height="11.62" fill="#8993cb"/><rect x="950.81" y="280.91" width="2.5" height="10.89" fill="#8993cb"/><rect x="954.63" y="281.64" width="2.5" height="10.16" fill="#8993cb"/><rect x="958.45" y="280.91" width="2.5" height="10.89" fill="#8993cb"/><rect x="962.27" y="245.09" width="2.5" height="46.71" fill="#8993cb"/><rect x="966.10" y="163.06" width="2.5" height="128.74" fill="#8993cb"/><rect x="969.92" y="186.53" width="2.5" height="105.27" fill="#8993cb"/><rect x="973.74" y="204.20" width="2.5" height="87.60" fill="#8993cb"/><rect x="977.56" y="272.20" width="2.5" height="19.60" fill="#8993cb"/><rect x="981.39" y="284.06" width="2.5" height="7.74" fill="#8993cb"/><rect x="985.21" y="275.59" width="2.5" height="16.21" fill="#8993cb"/><rect x="989.03" y="272.20" width="2.5" height="19.60" fill="#8993cb"/><rect x="992.85" y="235.90" width="2.5" height="55.90" fill="#8993cb"/><rect x="996.68" y="159.18" width="2.5" height="132.62" fill="#8993cb"/><rect x="1000.50" y="183.87" width="2.5" height="107.93" fill="#8993cb"/><rect x="1004.32" y="208.31" width="2.5" height="83.49" fill="#8993cb"/><rect x="1008.14" y="275.34" width="2.5" height="16.46" fill="#8993cb"/><rect x="1011.97" y="279.22" width="2.5" height="12.58" fill="#8993cb"/><rect x="1015.79" y="283.09" width="2.5" height="8.71" fill="#8993cb"/><rect x="1019.61" y="280.43" width="2.5" height="11.37" fill="#8993cb"/><rect x="1023.43" y="272.44" width="2.5" height="19.36" fill="#8993cb"/><rect x="1027.26" y="257.92" width="2.5" height="33.88" fill="#8993cb"/><rect x="1031.08" y="264.45" width="2.5" height="27.35" fill="#8993cb"/><rect x="1034.90" y="272.20" width="2.5" height="19.60" fill="#8993cb"/><rect x="1038.72" y="281.88" width="2.5" height="9.92" fill="#8993cb"/><rect x="1042.55" y="284.78" width="2.5" height="7.02" fill="#8993cb"/><rect x="1046.37" y="285.75" width="2.5" height="6.05" fill="#8993cb"/><rect x="1050.19" y="286.48" width="2.5" height="5.32" fill="#8993cb"/><rect x="1054.01" y="284.78" width="2.5" height="7.02" fill="#8993cb"/><rect x="1057.84" y="283.57" width="2.5" height="8.23" fill="#8993cb"/><rect x="1061.66" y="284.78" width="2.5" height="7.02" fill="#8993cb"/><rect x="1065.48" y="286.48" width="2.5" height="5.32" fill="#8993cb"/><rect x="1069.30" y="284.06" width="2.5" height="7.74" fill="#8993cb"/><rect x="1073.13" y="285.51" width="2.5" height="6.29" fill="#8993cb"/><rect x="1076.95" y="288.65" width="2.5" height="3.15" fill="#8993cb"/><rect x="1080.77" y="287.20" width="2.5" height="4.60" fill="#8993cb"/><rect x="1084.59" y="237.35" width="2.5" height="54.45" fill="#8993cb"/><rect x="1088.42" y="161.60" width="2.5" height="130.20" fill="#8993cb"/><rect x="1092.24" y="182.90" width="2.5" height="108.90" fill="#8993cb"/><rect x="1096.06" y="201.29" width="2.5" height="90.51" fill="#8993cb"/><rect x="1099.88" y="284.78" width="2.5" height="7.02" fill="#8993cb"/><rect x="1103.71" y="284.78" width="2.5" height="7.02" fill="#8993cb"/><rect x="1107.53" y="277.04" width="2.5" height="14.76" fill="#8993cb"/><rect x="1111.35" y="273.89" width="2.5" height="17.91" fill="#8993cb"/><rect x="1115.17" y="225.25" width="2.5" height="66.55" fill="#8993cb"/><rect x="1119.00" y="138.37" width="2.5" height="153.43" fill="#8993cb"/><rect x="1122.82" y="159.67" width="2.5" height="132.13" fill="#8993cb"/><rect x="1126.64" y="188.95" width="2.5" height="102.85" fill="#8993cb"/><rect x="1130.46" y="282.36" width="2.5" height="9.44" fill="#8993cb"/><rect x="1134.29" y="288.65" width="2.5" height="3.15" fill="#8993cb"/><rect x="1138.11" y="289.86" width="2.5" height="1.94" fill="#8993cb"/><rect x="1141.93" y="289.62" width="2.5" height="2.18" fill="#8993cb"/><rect x="1145.75" y="240.01" width="2.5" height="51.79" fill="#8993cb"/><rect x="1149.58" y="146.60" width="2.5" height="145.20" fill="#8993cb"/><rect x="1153.40" y="172.98" width="2.5" height="118.82" fill="#8993cb"/><rect x="1157.22" y="200.32" width="2.5" height="91.48" fill="#8993cb"/><rect x="1161.04" y="281.88" width="2.5" height="9.92" fill="#8993cb"/><rect x="1164.87" y="289.86" width="2.5" height="1.94" fill="#8993cb"/><rect x="1168.69" y="287.69" width="2.5" height="4.11" fill="#8993cb"/><rect x="1172.51" y="282.36" width="2.5" height="9.44" fill="#8993cb"/><rect x="1176.33" y="238.08" width="2.5" height="53.72" fill="#8993cb"/><rect x="1180.16" y="156.76" width="2.5" height="135.04" fill="#8993cb"/><rect x="1183.98" y="164.99" width="2.5" height="126.81" fill="#8993cb"/><rect x="1187.80" y="192.10" width="2.5" height="99.70" fill="#8993cb"/><rect x="1191.62" y="280.91" width="2.5" height="10.89" fill="#8993cb"/><rect x="1195.45" y="285.51" width="2.5" height="6.29" fill="#8993cb"/><rect x="1199.27" y="286.48" width="2.5" height="5.32" fill="#8993cb"/><rect x="1203.09" y="288.17" width="2.5" height="3.63" fill="#8993cb"/><rect x="1206.91" y="240.74" width="2.5" height="51.06" fill="#8993cb"/><rect x="1210.74" y="163.54" width="2.5" height="128.26" fill="#8993cb"/><rect x="1214.56" y="176.37" width="2.5" height="115.43" fill="#8993cb"/><rect x="1218.38" y="201.05" width="2.5" height="90.75" fill="#8993cb"/><rect x="1222.20" y="283.57" width="2.5" height="8.23" fill="#8993cb"/><rect x="1226.03" y="288.17" width="2.5" height="3.63" fill="#8993cb"/><rect x="1229.85" y="288.17" width="2.5" height="3.63" fill="#8993cb"/><rect x="1233.67" y="288.17" width="2.5" height="3.63" fill="#8993cb"/><rect x="1237.49" y="275.59" width="2.5" height="16.21" fill="#8993cb"/><rect x="1241.32" y="262.28" width="2.5" height="29.52" fill="#8993cb"/><rect x="1245.14" y="265.18" width="2.5" height="26.62" fill="#8993cb"/><rect x="1248.96" y="270.02" width="2.5" height="21.78" fill="#8993cb"/><rect x="1252.78" y="281.64" width="2.5" height="10.16" fill="#8993cb"/><rect x="1256.61" y="284.30" width="2.5" height="7.50" fill="#8993cb"/><rect x="1260.43" y="288.17" width="2.5" height="3.63" fill="#8993cb"/><rect x="1264.25" y="288.17" width="2.5" height="3.63" fill="#8993cb"/><rect x="1268.07" y="285.51" width="2.5" height="6.29" fill="#8993cb"/><rect x="1271.90" y="282.36" width="2.5" height="9.44" fill="#8993cb"/><rect x="1275.72" y="284.06" width="2.5" height="7.74" fill="#8993cb"/><rect x="1279.54" y="285.75" width="2.5" height="6.05" fill="#8993cb"/><rect x="1283.36" y="288.65" width="2.5" height="3.15" fill="#8993cb"/><rect x="1287.19" y="289.38" width="2.5" height="2.42" fill="#8993cb"/><rect x="1291.01" y="288.65" width="2.5" height="3.15" fill="#8993cb"/><rect x="1294.83" y="288.65" width="2.5" height="3.15" fill="#8993cb"/><rect x="1298.65" y="242.19" width="2.5" height="49.61" fill="#8993cb"/><rect x="1302.48" y="146.36" width="2.5" height="145.44" fill="#8993cb"/><rect x="1306.30" y="162.09" width="2.5" height="129.71" fill="#8993cb"/><rect x="1310.12" y="190.64" width="2.5" height="101.16" fill="#8993cb"/><rect x="1313.94" y="283.57" width="2.5" height="8.23" fill="#8993cb"/><rect x="1317.77" y="290.35" width="2.5" height="1.45" fill="#8993cb"/><rect x="1321.59" y="286.96" width="2.5" height="4.84" fill="#8993cb"/><rect x="1325.41" y="288.17" width="2.5" height="3.63" fill="#8993cb"/><rect x="1329.23" y="249.69" width="2.5" height="42.11" fill="#8993cb"/><rect x="1333.06" y="146.60" width="2.5" height="145.20" fill="#8993cb"/><rect x="1336.88" y="175.88" width="2.5" height="115.92" fill="#8993cb"/><rect x="1340.70" y="195.24" width="2.5" height="96.56" fill="#8993cb"/><rect x="1344.52" y="281.15" width="2.5" height="10.65" fill="#8993cb"/><rect x="1348.35" y="289.86" width="2.5" height="1.94" fill="#8993cb"/><rect x="1352.17" y="289.86" width="2.5" height="1.94" fill="#8993cb"/><rect x="1355.99" y="289.86" width="2.5" height="1.94" fill="#8993cb"/><rect x="1359.81" y="240.01" width="2.5" height="51.79" fill="#8993cb"/><rect x="1363.64" y="142.97" width="2.5" height="148.83" fill="#8993cb"/><rect x="1367.46" y="157.73" width="2.5" height="134.07" fill="#8993cb"/><rect x="1371.28" y="191.13" width="2.5" height="100.67" fill="#8993cb"/><rect x="1375.10" y="278.25" width="2.5" height="13.55" fill="#8993cb"/><rect x="1378.93" y="284.30" width="2.5" height="7.50" fill="#8993cb"/><rect x="1382.75" y="284.30" width="2.5" height="7.50" fill="#8993cb"/><rect x="1386.57" y="285.51" width="2.5" height="6.29" fill="#8993cb"/><rect x="1390.39" y="266.87" width="2.5" height="24.93" fill="#8993cb"/><rect x="1394.22" y="215.57" width="2.5" height="76.23" fill="#8993cb"/><rect x="1398.04" y="238.32" width="2.5" height="53.48" fill="#8993cb"/><rect x="1401.86" y="262.52" width="2.5" height="29.28" fill="#8993cb"/><rect x="1405.68" y="287.44" width="2.5" height="4.36" fill="#8993cb"/><rect x="1409.51" y="289.38" width="2.5" height="2.42" fill="#8993cb"/><rect x="1413.33" y="289.38" width="2.5" height="2.42" fill="#8993cb"/><rect x="1417.15" y="282.85" width="2.5" height="8.95" fill="#8993cb"/><rect x="1420.97" y="253.81" width="2.5" height="37.99" fill="#8993cb"/><rect x="1424.80" y="213.15" width="2.5" height="78.65" fill="#8993cb"/><rect x="1428.62" y="243.40" width="2.5" height="48.40" fill="#8993cb"/><rect x="1432.44" y="261.79" width="2.5" height="30.01" fill="#8993cb"/><rect x="1436.26" y="289.38" width="2.5" height="2.42" fill="#8993cb"/><rect x="1440.09" y="290.35" width="2.5" height="1.45" fill="#8993cb"/><rect x="1443.91" y="290.35" width="2.5" height="1.45" fill="#8993cb"/><rect x="1447.73" y="288.65" width="2.5" height="3.15" fill="#8993cb"/><rect x="1451.55" y="277.04" width="2.5" height="14.76" fill="#8993cb"/><rect x="1455.38" y="253.32" width="2.5" height="38.48" fill="#8993cb"/><rect x="1459.20" y="258.40" width="2.5" height="33.40" fill="#8993cb"/><rect x="1463.02" y="273.17" width="2.5" height="18.63" fill="#8993cb"/><rect x="1466.84" y="283.57" width="2.5" height="8.23" fill="#8993cb"/><rect x="1470.67" y="287.69" width="2.5" height="4.11" fill="#8993cb"/><rect x="1474.49" y="290.35" width="2.5" height="1.45" fill="#8993cb"/><rect x="1478.31" y="290.35" width="2.5" height="1.45" fill="#8993cb"/><rect x="1482.13" y="289.38" width="2.5" height="2.42" fill="#8993cb"/><rect x="1485.96" y="287.69" width="2.5" height="4.11" fill="#8993cb"/><rect x="1489.78" y="288.90" width="2.5" height="2.90" fill="#8993cb"/></svg>
<div class="t" style="left:140px;width:700px;text-align:right;top:285.30px;font-size:10.2px;line-height:13px;font-weight:normal;color:#666;">0</div>
<div class="t" style="left:140px;width:700px;text-align:right;top:261.10px;font-size:10.2px;line-height:13px;font-weight:normal;color:#666;">100K</div>
<div class="t" style="left:140px;width:700px;text-align:right;top:236.90px;font-size:10.2px;line-height:13px;font-weight:normal;color:#666;">200K</div>
<div class="t" style="left:140px;width:700px;text-align:right;top:212.70px;font-size:10.2px;line-height:13px;font-weight:normal;color:#666;">300K</div>
<div class="t" style="left:140px;width:700px;text-align:right;top:188.50px;font-size:10.2px;line-height:13px;font-weight:normal;color:#666;">400K</div>
<div class="t" style="left:140px;width:700px;text-align:right;top:164.30px;font-size:10.2px;line-height:13px;font-weight:normal;color:#666;">500K</div>
<div class="t" style="left:140px;width:700px;text-align:right;top:140.10px;font-size:10.2px;line-height:13px;font-weight:normal;color:#666;">600K</div>
<div class="t" style="left:140px;width:700px;text-align:right;top:115.90px;font-size:10.2px;line-height:13px;font-weight:normal;color:#666;">700K</div>
<div class="t" style="left:575.4px;width:700px;text-align:center;top:295.70px;font-size:10.2px;line-height:13px;font-weight:normal;color:#666;">13</div>
<div class="t" style="left:697.5999999999999px;width:700px;text-align:center;top:295.70px;font-size:10.2px;line-height:13px;font-weight:normal;color:#666;">17</div>
<div class="t" style="left:819.8px;width:700px;text-align:center;top:295.70px;font-size:10.2px;line-height:13px;font-weight:normal;color:#666;">21</div>
<div class="t" style="left:942.0px;width:700px;text-align:center;top:295.70px;font-size:10.2px;line-height:13px;font-weight:normal;color:#666;">25</div>
<div class="t" style="left:1064.9px;width:700px;text-align:center;top:295.70px;font-size:10.2px;line-height:13px;font-weight:normal;color:#666;">29</div>
<div class="t" style="left:1126.8px;width:700px;text-align:center;top:295.70px;font-size:10.2px;line-height:13px;font-weight:bold;color:#555;">Dec</div>
<div class="t" style="left:820.5px;width:700px;text-align:center;top:311.50px;font-size:12.2px;line-height:16px;font-weight:bold;color:#555;">Timestamp</div>
<div class="t" style="left:759px;top:199px;width:100px;text-align:center;font-size:12.2px;line-height:16px;font-weight:bold;color:#555;transform:rotate(-90deg)">Message Action</div>
<div class="r" style="left:798px;top:329.5px;width:21.5px;height:13px;background:#8c96cc;border-radius:3px"></div>
<div class="t" style="left:824.5px;top:327.80px;font-size:10.6px;line-height:14px;font-weight:normal;color:#333;">Message Action</div>
<div class="p" style="left:788px;top:355px;width:723px;height:263.5px"></div>
<div class="r" style="left:796.0px;top:363.0px;width:2px;height:2px;background:#111;border-radius:0.6px"></div>
<div class="r" style="left:796.0px;top:366.1px;width:2px;height:2px;background:#111;border-radius:0.6px"></div>
<div class="r" style="left:796.0px;top:369.2px;width:2px;height:2px;background:#111;border-radius:0.6px"></div>
<div class="r" style="left:799.3px;top:363.0px;width:2px;height:2px;background:#111;border-radius:0.6px"></div>
<div class="r" style="left:799.3px;top:366.1px;width:2px;height:2px;background:#111;border-radius:0.6px"></div>
<div class="r" style="left:799.3px;top:369.2px;width:2px;height:2px;background:#111;border-radius:0.6px"></div>
<div class="t" style="left:812px;top:358.50px;font-size:12.4px;line-height:16px;font-weight:normal;color:#282828;">Requests by HTTP Version</div>
<svg class="r" style="left:1496px;top:364.8px" width="5" height="3.2" viewBox="0 0 5 3.2"><path d="M0 0.2H5L2.5 3Z" fill="#111"/></svg>
<svg class="r" style="left:1475.4px;top:361.2px" width="11" height="11" viewBox="0 0 11 11"><path d="M8.6 2.6A4.3 4.3 0 1 0 9.6 6.4" stroke="#111" stroke-width="1.9" fill="none"/><path d="M10.5 0.6V4.9H6.2Z" fill="#111"/></svg>
<div class="t" style="left:770px;width:700px;text-align:right;top:360.10px;font-size:10.5px;line-height:14px;font-weight:normal;color:#222;">10m ago</div>
<svg class="r" style="left:1418px;top:361.5px" width="10" height="10" viewBox="0 0 10 10"><defs><radialGradient id="cg" cx="0.4" cy="0.35" r="0.7"><stop offset="0" stop-color="#fafafa"/><stop offset="1" stop-color="#cfcfcf"/></radialGradient></defs><circle cx="5" cy="5" r="4.4" fill="url(#cg)" stroke="#8a8a8a" stroke-width="0.9"/><path d="M5 2.3V5H6.9" stroke="#888" stroke-width="0.6" fill="none"/></svg>
<svg class="r" style="left:0;top:0" width="1500" height="785"><path d="M918.74 459.68A56 56 0 1 1 1021.06 459.68L1002.42 451.38A35.6 35.6 0 1 0 937.38 451.38Z" fill="#e0e58c"/></svg>
<div class="t" style="left:619.9px;width:700px;text-align:center;top:431.20px;font-size:10.2px;line-height:13px;font-weight:bold;color:#333;">25M</div>
<div class="t" style="left:619.9px;width:700px;text-align:center;top:470.10px;font-size:9.1px;line-height:12px;font-weight:normal;color:#555;">HTTP/2.0</div>
<svg class="r" style="left:0;top:0" width="1500" height="785"><path d="M1279.14 459.98A56 56 0 1 1 1381.46 459.98L1362.82 451.68A35.6 35.6 0 1 0 1297.78 451.68Z" fill="#ebefba"/></svg>
<div class="t" style="left:980.3px;width:700px;text-align:center;top:431.50px;font-size:10.2px;line-height:13px;font-weight:bold;color:#333;">285</div>
<div class="t" style="left:980.3px;width:700px;text-align:center;top:470.40px;font-size:9.1px;line-height:12px;font-weight:normal;color:#555;">HTTP/1.0</div>
<svg class="r" style="left:0;top:0" width="1500" height="785"><path d="M918.74 580.18A56 56 0 1 1 1021.06 580.18L1002.42 571.88A35.6 35.6 0 1 0 937.38 571.88Z" fill="#e0e58c"/></svg>
<div class="t" style="left:619.9px;width:700px;text-align:center;top:551.70px;font-size:10.2px;line-height:13px;font-weight:bold;color:#333;">2M</div>
<div class="t" style="left:619.9px;width:700px;text-align:center;top:590.60px;font-size:9.1px;line-height:12px;font-weight:normal;color:#555;">HTTP/1.1</div>
<svg class="r" style="left:781.95px;top:324.1px" width="10.2" height="15.3" viewBox="0 0 12 18"><path d="M1 1V14.5L4.2 11.6L6.6 16.8L8.6 15.9L6.3 10.9H10.6Z" fill="#111" stroke="#fff" stroke-width="1"/></svg>
</body></html>
